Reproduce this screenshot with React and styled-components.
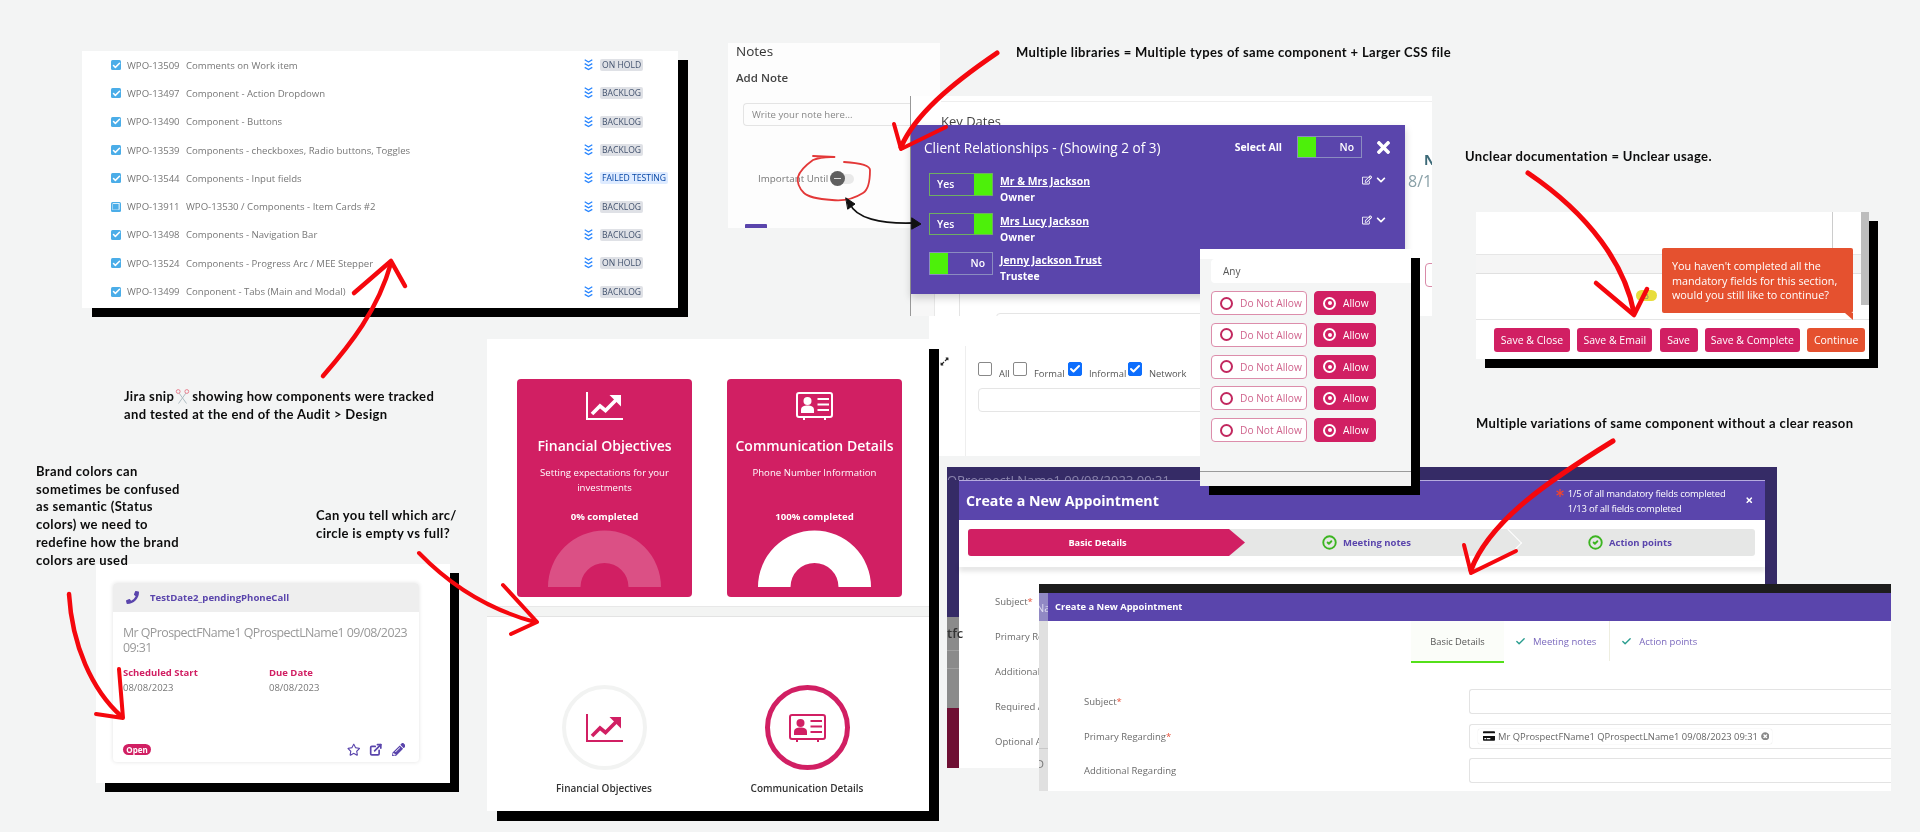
import React from 'react';
import styled, { createGlobalStyle } from 'styled-components';
import { FaPhoneAlt, FaRegStar, FaPencilAlt, FaRegEdit, FaChevronDown, FaTimes, FaAsterisk, FaExpandAlt, FaTimesCircle, FaCreditCard } from 'react-icons/fa';
import { FiExternalLink, FiCheck } from 'react-icons/fi';
import { LuCircleCheck } from 'react-icons/lu';

const UI = `"Open Sans", "Liberation Sans", sans-serif`;
const PINK = '#d11f63';
const PURPLE = '#5a45ac';

const Global = createGlobalStyle`
  html, body { margin: 0; padding: 0; background: #f3f4f4; overflow: hidden; }
  * { box-sizing: border-box; }
`;

const Canvas = styled.div`
  position: relative;
  width: 1920px;
  height: 832px;
  overflow: hidden;
  background: #f3f4f4;
  font-family: ${UI};
  filter: blur(0.35px);
`;

// every screenshot in the collage is a window on a free canvas
const Snip = styled.div`
  position: absolute;
  left: ${p => p.$x}px;
  top: ${p => p.$y}px;
  width: ${p => p.$w}px;
  height: ${p => p.$h}px;
  background: ${p => p.$bg || '#fff'};
  ${p => p.$shadow && `box-shadow: ${p.$shadow};`}
  overflow: ${p => p.$clip === false ? 'visible' : 'hidden'};
`;

const Note = styled.p`
  position: absolute;
  left: ${p => p.$x}px;
  top: ${p => p.$y}px;
  margin: 0;
  font-family: "Lato", "Liberation Sans", sans-serif;
  font-weight: 700;
  font-size: 13px;
  line-height: 17.7px;
  letter-spacing: 0.36px;
  color: #0c0c0c;
  white-space: nowrap;
`;

const Overlay = styled.svg`
  position: absolute;
  inset: 0;
  pointer-events: none;
`;

/* ---------- jira list ---------- */
const JiraRow = styled.div`
  display: grid;
  grid-template-columns: 10px 59px 404px 94px;
  align-items: center;
  height: 28.3px;
  padding-left: 29px;
  font-size: 9.6px;
  color: #777;
`;
const JiraKey = styled.span`
  margin-left: 6px;
  white-space: nowrap;
`;
const JiraTitle = styled.span`
  margin-left: 6px;
  white-space: nowrap;
`;
const JiraBox = styled.span`
  width: 10px;
  height: 10px;
  border-radius: 1.5px;
  background: #4bade8;
  display: flex;
  align-items: center;
  justify-content: center;
  color: #fff;
  font-size: 9px;
`;
const JiraStatus = styled.div`
  display: flex;
  align-items: center;
  gap: 7px;
`;
const Lozenge = styled.span`
  height: 12px;
  padding: 0 2px;
  border-radius: 2px;
  font-size: 8.6px;
  line-height: 12px;
  white-space: nowrap;
  background: ${p => p.$blue ? '#deebff' : '#dfe1e6'};
  color: ${p => p.$blue ? '#0747a6' : '#42526e'};
`;

const TriChevron = () => (
  <svg width="9" height="12" viewBox="0 0 9 12" fill="none" stroke="#2684ff" strokeWidth="1.3">
    <path d="M0.7 0.8 4.5 3 8.3 0.8M0.7 4.6 4.5 6.8 8.3 4.6M0.7 8.4 4.5 10.6 8.3 8.4" />
  </svg>
);

/* ---------- notes ---------- */
const NotesBody = styled.div`
  display: flex;
  flex-direction: column;
  height: 100%;
  padding-left: 8px;
  background: #fdfdfd;
`;
const NotesTitle = styled.div`
  font-size: 13.5px;
  line-height: 16px;
  color: #333;
`;
const AddNote = styled.div`
  margin-top: 11px;
  font-size: 11.5px;
  font-weight: 600;
  line-height: 16px;
  color: #444;
`;
const NoteInput = styled.div`
  margin: 17px 30px 0 7px;
  height: 23px;
  border: 1px solid #e4e4e4;
  border-right: 0;
  border-radius: 4px 0 0 4px;
  padding-left: 8px;
  font-size: 9.6px;
  line-height: 21px;
  color: #888;
  white-space: nowrap;
`;
const Important = styled.div`
  display: flex;
  align-items: center;
  margin: 46px 0 0 22px;
  font-size: 9.8px;
  color: #777;
`;
const NoteSwitch = styled.span`
  position: relative;
  margin-left: 2px;
  width: 24px;
  height: 10px;
  border-radius: 5px;
  background: #e9e9e9;
`;
const NoteKnob = styled.span`
  position: absolute;
  left: 0;
  top: -3px;
  width: 15px;
  height: 15px;
  border-radius: 50%;
  background: #5f5f5f;
  &::after {
    content: '';
    position: absolute;
    left: 4px;
    top: 7px;
    width: 7px;
    height: 1.5px;
    background: #ddd;
  }
`;
const NoteTab = styled.span`
  margin: auto 0 0 9px;
  width: 22px;
  height: 4px;
  background: ${PURPLE};
  border-radius: 1px 1px 0 0;
`;

/* ---------- key dates, behind the client panel ---------- */
const DatesPanel = styled.div`
  position: relative;
  display: grid;
  grid-template-columns: 24px 25px 1fr;
  grid-template-rows: 29px 1fr;
  height: 100%;
  border-left: 1px solid #999;
  background: #fff;
`;
const KeyDates = styled.div`
  grid-column: 1 / -1;
  margin: 5px 0 0 30px;
  padding-top: 12px;
  border-top: 1px solid #eee;
  font-size: 13px;
  line-height: 14px;
  color: #444;
`;
const DatesGutter = styled.div`
  background: #f7f7f7;
  border-right: 1px solid #e8e8e8;
`;
const DatesMiddle = styled.div`
  border-right: 1px solid #e4e4e4;
`;
const DateNumber = styled.span`
  position: absolute;
  left: ${p => p.$left}px;
  top: ${p => p.$top}px;
  font-size: ${p => p.$size}px;
  font-weight: ${p => p.$bold ? 700 : 400};
  color: ${p => p.$bold ? '#3d6a78' : '#8aa1a8'};
  white-space: nowrap;
`;
const DatesInput = styled.div`
  position: absolute;
  left: 85px;
  top: 217px;
  width: 300px;
  height: 30px;
  border: 1px solid #e5e5e5;
  border-radius: 4px;
`;
const DatesPinkEdge = styled.div`
  position: absolute;
  left: 514px;
  top: 167px;
  width: 30px;
  height: 24px;
  border: 1px solid #d98aa8;
  border-radius: 4px;
`;

/* ---------- client relationships ---------- */
const ClientBody = styled.div`
  height: 100%;
  padding: 11px 12px 0 13px;
  background: ${PURPLE};
  color: #fff;
`;
const ClientHeader = styled.div`
  display: flex;
  align-items: center;
  height: 22px;
  margin-bottom: 15px;
`;
const ClientTitle = styled.div`
  font-size: 13.6px;
  white-space: nowrap;
`;
const SelectAll = styled.span`
  margin-left: auto;
  margin-right: 15px;
  font-size: 10.4px;
  font-weight: 700;
`;
const Toggle = styled.span`
  display: flex;
  flex-direction: ${p => p.$on ? 'row' : 'row-reverse'};
  flex: none;
  width: ${p => p.$w || 64}px;
  height: 22.5px;
  border: 1px solid ${p => p.$on ? '#6fae62' : '#8b8cc0'};
  font-size: 10.4px;
  font-weight: 600;
  color: #fff;
`;
const ToggleLabel = styled.span`
  flex: 1;
  line-height: 21px;
  padding: ${p => p.$on ? '0 0 0 7px' : '0 7px 0 0'};
  text-align: ${p => p.$on ? 'left' : 'right'};
`;
const ToggleBlock = styled.span`
  width: 18px;
  background: #4df00a;
`;
const CloseX = styled(FaTimes)`
  margin-left: 12px;
  font-size: 19px;
  flex: none;
`;
const ClientRow = styled.div`
  display: flex;
  gap: 7px;
  height: 39.5px;
  padding-left: 5px;
`;
const ClientWho = styled.div`
  flex: 1;
  font-size: 10.4px;
  font-weight: 700;
  line-height: 16px;
`;
const ClientName = styled.div`
  text-decoration: underline;
  white-space: nowrap;
`;
const ClientTools = styled.div`
  display: flex;
  align-items: center;
  gap: 4px;
  height: 14px;
  padding-right: 7px;
  font-size: 10px;
`;

/* ---------- permissions ---------- */
const PermBody = styled.div`
  display: flex;
  flex-direction: column;
  height: 100%;
  padding: 10px 0 0 11px;
  background: linear-gradient(#fff 0, #fff 10px, #f4f5f5 10px);
`;
const AnyField = styled.div`
  height: 24px;
  margin-bottom: 8px;
  padding-left: 12px;
  background: #fff;
  border-radius: 4px 0 0 4px;
  font-size: 10px;
  line-height: 24px;
  color: #555;
`;
const PermRow = styled.div`
  display: flex;
  gap: 7px;
  height: 31.8px;
`;
const PermButton = styled.span`
  display: flex;
  align-items: center;
  gap: 7px;
  width: ${p => p.$w}px;
  height: 24px;
  padding-left: 8px;
  border-radius: 4px;
  border: 1px solid ${p => p.$solid ? PINK : '#dc8dab'};
  background: ${p => p.$solid ? PINK : '#fff'};
  color: ${p => p.$solid ? '#fff' : '#d0648d'};
  font-size: 10.2px;
  white-space: nowrap;
`;
const Radio = styled.span`
  position: relative;
  flex: none;
  width: 13px;
  height: 13px;
  border-radius: 50%;
  border: 2px solid ${p => p.$solid ? '#fff' : '#c2285f'};
  ${p => p.$solid && `
    &::after {
      content: '';
      position: absolute;
      left: 2.5px;
      top: 2.5px;
      width: 4px;
      height: 4px;
      border-radius: 50%;
      background: #fff;
    }
  `}
`;
const PermFooter = styled.div`
  margin: auto 0 0 -11px;
  height: 15px;
  border-top: 1px solid #9a9a9a;
  background: #f2f2f2;
`;

/* ---------- filter panel ---------- */
const FilterBody = styled.div`
  position: relative;
  height: 100%;
  padding: 46px 0 0 49px;
  background: #fff;
`;
const FilterEdge = styled.div`
  position: absolute;
  left: 36px;
  top: 30px;
  bottom: 0;
  border-left: 1px solid #eee;
`;
const ExpandIcon = styled(FaExpandAlt)`
  position: absolute;
  left: 11px;
  top: 41px;
  font-size: 9px;
  color: #222;
`;
const FilterRow = styled.div`
  display: flex;
  align-items: flex-start;
  height: 26px;
  font-size: 9.4px;
  color: #555;
`;
const FilterBox = styled.span`
  flex: none;
  width: 14px;
  height: 14px;
  border-radius: 2px;
  border: 1px solid ${p => p.$on ? '#0d6efd' : '#888'};
  background: ${p => p.$on ? '#0d6efd' : '#fff'};
  color: #fff;
  display: flex;
  align-items: center;
  justify-content: center;
  font-size: 12px;
`;
const FilterLabel = styled.span`
  flex: none;
  width: ${p => p.$w}px;
  padding: 5px 0 0 7px;
`;
const FilterInput = styled.div`
  width: 230px;
  height: 24px;
  border: 1px solid #e5e5e5;
  border-radius: 4px;
`;

/* ---------- progress tiles ---------- */
const ProgressBody = styled.div`
  display: flex;
  flex-direction: column;
  height: 100%;
`;
const TileRow = styled.div`
  display: flex;
  gap: 35px;
  height: 267px;
  padding: 40px 0 0 30px;
`;
const Tile = styled.div`
  position: relative;
  width: 175px;
  height: 218px;
  padding-top: 13px;
  border-radius: 4px;
  background: ${PINK};
  color: #fff;
  text-align: center;
  > svg:first-child {
    display: block;
    margin: 0 auto;
  }
`;
const TileTitle = styled.div`
  margin-top: 16px;
  font-size: 14px;
  font-weight: 600;
  line-height: 20px;
  white-space: nowrap;
`;
const TileSub = styled.div`
  height: 30px;
  margin-top: 8.5px;
  padding: 0 14px;
  font-size: 9.6px;
  line-height: 15px;
`;
const TileDone = styled.div`
  margin-top: 14px;
  font-size: 9.6px;
  font-weight: 700;
  line-height: 15px;
`;
const TileArc = styled.svg`
  position: absolute;
  left: 31px;
  top: 151px;
`;
const BandRule = styled.div`
  height: 11px;
  background: #f3f4f3;
  border-top: 1px solid #e8e8e8;
  border-bottom: 1px solid #e3e3e3;
`;
const RingRow = styled.div`
  display: grid;
  grid-template-columns: 234px 170px;
  column-gap: 1px;
  justify-content: start;
  padding-top: 68px;
`;
const RingCell = styled.div`
  display: flex;
  flex-direction: column;
  align-items: center;
`;
const Ring = styled.div`
  display: flex;
  align-items: center;
  justify-content: center;
  width: 85px;
  height: 85px;
  border-radius: 50%;
  border: ${p => p.$full ? `5px solid ${PINK}` : '4px solid #f2f3f2'};
  color: ${PINK};
`;
const RingLabel = styled.div`
  margin-top: 11px;
  font-size: 10px;
  font-weight: 600;
  line-height: 14px;
  color: #333;
  white-space: nowrap;
`;

const ChartIcon = () => (
  <svg width="37" height="28" viewBox="0 0 37 28" fill="none">
    <path d="M1 0V27H37" stroke="currentColor" strokeWidth="2" />
    <path d="M6 22 14 14 19.5 18.5 30 8" stroke="currentColor" strokeWidth="3.6" />
    <path d="M23.5 3 35 3 35 14.5Z" fill="currentColor" />
  </svg>
);

const CardIcon = () => (
  <svg width="37" height="28" viewBox="0 0 37 28" fill="none">
    <rect x="1" y="1" width="35" height="24" rx="2" stroke="currentColor" strokeWidth="2" />
    <path d="M8 25v3M29 25v3" stroke="currentColor" strokeWidth="2" />
    <circle cx="11.5" cy="9" r="4" fill="currentColor" />
    <path d="M5 21v-3c0-3.5 3-4.5 6.500-4.500s6.500 1 6.500 4.500v3Z" fill="currentColor" />
    <path d="M21.500 7H33M21.500 12.500H33M21.500 18H33" stroke="currentColor" strokeWidth="2" />
  </svg>
);

/* ---------- task card ---------- */
const TaskCard = styled.div`
  display: flex;
  flex-direction: column;
  height: 179px;
  margin: 19px 0 0 17px;
  width: 306px;
  border-radius: 4px;
  box-shadow: 0 0 4px rgba(0, 0, 0, 0.12);
  overflow: hidden;
`;
const TaskHead = styled.div`
  display: flex;
  align-items: center;
  gap: 11px;
  height: 29px;
  padding-left: 13px;
  background: #eeeeee;
  font-size: 9.6px;
  font-weight: 700;
  color: ${PURPLE};
`;
const TaskBody = styled.div`
  display: flex;
  flex-direction: column;
  flex: 1;
  padding: 13px 10px 6px 10px;
`;
const TaskName = styled.div`
  font-size: 12.4px;
  line-height: 15px;
  letter-spacing: -0.55px;
  color: #999;
`;
const TaskDates = styled.div`
  display: grid;
  grid-template-columns: 146px 1fr;
  margin-top: 11px;
  font-size: 9.5px;
  line-height: 14.500px;
  color: #777;
`;
const TaskDateLabel = styled.div`
  font-weight: 700;
  color: ${PINK};
`;
const TaskFoot = styled.div`
  display: flex;
  align-items: center;
  justify-content: space-between;
  margin-top: auto;
  padding-right: 4px;
`;
const OpenBadge = styled.span`
  width: 28px;
  height: 11px;
  border-radius: 6px;
  background: ${PINK};
  color: #fff;
  font-size: 8px;
  font-weight: 700;
  line-height: 11px;
  text-align: center;
`;
const TaskTools = styled.div`
  display: flex;
  gap: 9px;
  font-size: 13.500px;
  color: ${PURPLE};
`;

/* ---------- unclear docs ---------- */
const DocsBody = styled.div`
  position: relative;
  display: flex;
  flex-direction: column;
  height: 100%;
`;
const DocsTop = styled.div`
  height: 42px;
  width: 357px;
  border-right: 1px solid #ccc;
`;
const DocsBand = styled.div`
  height: 20px;
  width: 385px;
  background: #f5f5f5;
  border-top: 1px solid #e6e6e6;
  border-bottom: 1px solid #e0e0e0;
`;
const DocsMid = styled.div`
  height: 46px;
  border-bottom: 1px solid #e5e5e5;
`;
const DocsScroll = styled.div`
  position: absolute;
  right: 0;
  top: 0;
  width: 8px;
  height: 93px;
  background: #bdbdbd;
`;
const DocsButtons = styled.div`
  display: flex;
  gap: 7.300px;
  padding: 8px 0 0 18px;
`;
const DocsButton = styled.span`
  flex: none;
  width: ${p => p.$w}px;
  height: 24px;
  border-radius: 3px;
  background: ${p => p.$warn ? '#e5512f' : PINK};
  color: #fff;
  font-size: 10.500px;
  line-height: 24px;
  text-align: center;
  white-space: nowrap;
`;
const Tooltip = styled.div`
  position: absolute;
  left: 186px;
  top: 36px;
  width: 191px;
  height: 65px;
  padding: 11px 0 0 10px;
  border-radius: 2px;
  background: #e5512f;
  color: #fff;
  font-size: 10.800px;
  line-height: 14.700px;
  &::after {
    content: '';
    position: absolute;
    right: 0;
    bottom: -7px;
    border-top: 7px solid #e5512f;
    border-left: 8px solid transparent;
  }
`;
const YellowBlob = styled.span`
  position: absolute;
  left: 160px;
  top: 78px;
  width: 21px;
  height: 11px;
  border-radius: 6px;
  background: #e8dd3c;
  font-size: 8px;
  line-height: 11px;
  text-align: center;
  color: #777;
`;

/* ---------- appointment windows ---------- */
const BackFrame = styled.div`
  position: relative;
  height: 100%;
  padding: 13px 12px 0 12px;
  background: linear-gradient(
    #352b66 0, #352b66 150px,
    #8b8b8b 150px, #8b8b8b 183px, #a0a0a0 183px, #a0a0a0 184px,
    #8b8b8b 184px, #8b8b8b 201px, #a0a0a0 201px, #a0a0a0 202px,
    #8b8b8b 202px, #8b8b8b 241px, #6e0f33 241px
  );
`;
const BackGhost = styled.div`
  position: absolute;
  left: 0;
  top: 7px;
  height: 6px;
  overflow: hidden;
  font-size: 13px;
  line-height: 12px;
  color: #8a84ad;
  white-space: nowrap;
`;
const BackCut = styled.span`
  position: absolute;
  left: 0;
  top: 157px;
  font-size: 13px;
  font-weight: 600;
  color: #333;
`;
const BackWindow = styled.div`
  height: 100%;
  background: #fff;
  border-top: 1px solid #b6acde;
`;
const BackHeader = styled.div`
  display: flex;
  align-items: center;
  height: 39px;
  padding: 0 12px 0 7px;
  background: ${PURPLE};
  color: #fff;
`;
const BackTitle = styled.div`
  font-size: 14.200px;
  font-weight: 700;
  white-space: nowrap;
`;
const BackCount = styled.div`
  position: relative;
  margin-left: auto;
  font-size: 9.500px;
  letter-spacing: -0.2px;
  line-height: 15px;
  white-space: nowrap;
`;
const RedStar = styled(FaAsterisk)`
  position: absolute;
  left: -12px;
  top: 3px;
  font-size: 8px;
  color: #f0452e;
`;
const BackClose = styled(FaTimes)`
  margin-left: 19px;
  font-size: 8.500px;
`;
const Stepper = styled.div`
  display: flex;
  height: 27px;
  margin: 9px 10px 0 9px;
  background: #e6e7e6;
  border-radius: 3px;
`;
const StepActive = styled.div`
  flex: none;
  width: 277px;
  padding-right: 18px;
  border-radius: 3px 0 0 3px;
  background: ${PINK};
  clip-path: polygon(0 0, 261px 0, 100% 50%, 261px 100%, 0 100%);
  color: #fff;
  font-size: 9.200px;
  font-weight: 700;
  line-height: 27px;
  text-align: center;
`;
const Step = styled.div`
  position: relative;
  display: flex;
  align-items: center;
  gap: 6px;
  flex: none;
  width: ${p => p.$w}px;
  padding-left: ${p => p.$pad}px;
  font-size: 9.500px;
  font-weight: 700;
  color: ${PURPLE};
  ${p => p.$sep && `
    &::after {
      content: '';
      position: absolute;
      right: -8px;
      top: 4px;
      width: 19px;
      height: 19px;
      border-top: 1px solid #fff;
      border-right: 1px solid #fff;
      transform: rotate(45deg);
    }
  `}
`;
const StepperShade = styled.div`
  height: 6px;
  margin-top: 5px;
  box-shadow: 0 4px 5px rgba(0, 0, 0, 0.12);
`;
const BackForm = styled.div`
  padding: 16.500px 0 0 36px;
`;
const FormLabel = styled.div`
  display: flex;
  align-items: center;
  height: ${p => p.$h || 35}px;
  font-size: 9.500px;
  color: #6b6b6b;
  white-space: nowrap;
`;
const Req = styled.span`
  color: #e8503a;
`;
const FrontGrid = styled.div`
  display: grid;
  grid-template-columns: 9px 1fr;
  height: 100%;
  border-top: 9px solid #1d1d1d;
`;
const FrontSliver = styled.div`
  display: flex;
  flex-direction: column;
  background: linear-gradient(
    #9189c4 0, #9189c4 28px, #e0e0e0 28px, #e0e0e0 155px,
    #c8c8c8 155px, #c8c8c8 156px, #e0e0e0 156px
  );
  font-size: 11px;
  overflow: hidden;
  text-indent: -3px;
`;
const SliverText = styled.span`
  margin-top: ${p => p.$top}px;
  line-height: 14px;
  color: ${p => p.$dark ? '#777' : '#dcdaf0'};
`;
const FrontMain = styled.div`
  display: flex;
  flex-direction: column;
  background: #fff;
`;
const FrontHeader = styled.div`
  height: 28px;
  padding-left: 7px;
  background: ${PURPLE};
  color: #fff;
  font-size: 9.400px;
  font-weight: 700;
  line-height: 28px;
`;
const Tabs = styled.div`
  display: flex;
  height: 42px;
  padding-left: 363px;
`;
const TabCurrent = styled.div`
  width: 93px;
  height: 42px;
  background: #fbfdf9;
  border-bottom: 2.500px solid #54e01a;
  font-size: 9.300px;
  color: #555;
  line-height: 41px;
  text-align: center;
`;
const TabDone = styled.div`
  display: flex;
  align-items: center;
  gap: 7px;
  height: 40px;
  padding: 0 13px 0 11px;
  border-right: ${p => p.$rule ? '1px solid #eeeee0' : '0'};
  font-size: 9.500px;
  color: #7a68bd;
  white-space: nowrap;
  svg { color: #2a9d8f; font-size: 11px; }
`;
const FrontForm = styled.div`
  display: grid;
  grid-template-columns: 385px 1fr;
  row-gap: 9.500px;
  padding: 26px 0 0 36px;
`;
const FrontField = styled.div`
  display: flex;
  align-items: center;
  height: 25px;
  padding-left: 8px;
  border: 1px solid #e3e3e3;
  border-right: 0;
  border-radius: 3px 0 0 3px;
`;
const Chip = styled.span`
  display: flex;
  align-items: center;
  gap: 3px;
  height: 15px;
  padding: 0 3px 0 5px;
  width: 294px;
  border-radius: 2px;
  font-size: 9.400px;
  color: #666;
  white-space: nowrap;
  box-shadow: 0 0 1px rgba(0, 0, 0, 0.2);
  svg:first-child { color: #111; font-size: 12px; flex: none; }
  svg:last-child { color: #888; font-size: 8.500px; flex: none; margin-left: auto; }
`;

/* ---------- data ---------- */
const jiraRows = [
  ['WPO-13509', 'Comments on Work item', 'ON HOLD'],
  ['WPO-13497', 'Component - Action Dropdown', 'BACKLOG'],
  ['WPO-13490', 'Component - Buttons', 'BACKLOG'],
  ['WPO-13539', 'Components - checkboxes, Radio buttons, Toggles', 'BACKLOG'],
  ['WPO-13544', 'Components - Input fields', 'FAILED TESTING'],
  ['WPO-13911', 'WPO-13530 / Components - Item Cards #2', 'BACKLOG'],
  ['WPO-13498', 'Components - Navigation Bar', 'BACKLOG'],
  ['WPO-13524', 'Components - Progress Arc / MEE Stepper', 'ON HOLD'],
  ['WPO-13499', 'Conponent - Tabs (Main and Modal)', 'BACKLOG'],
];

const clientRows = [
  { name: 'Mr & Mrs Jackson', role: 'Owner', on: true },
  { name: 'Mrs Lucy Jackson', role: 'Owner', on: true },
  { name: 'Jenny Jackson Trust', role: 'Trustee', on: false },
];

const filters = [
  ['All', false, 21],
  ['Formal', false, 41],
  ['Informal', true, 46],
  ['Network', true, 60],
];

const docsButtons = [
  ['Save & Close', 76],
  ['Save & Email', 75],
  ['Save', 38],
  ['Save & Complete', 95],
  ['Continue', 58, true],
];

const Arc = ({ fill, opacity }) => (
  <TileArc width="113" height="57" viewBox="0 0 113 57">
    <path d="M0 57A56.500 56.500 0 0 1 113 57H80.500A24 24 0 0 0 32.500 57Z" fill={fill} opacity={opacity} />
  </TileArc>
);

const Scissors = () => (
  <svg width="15" height="15" viewBox="0 0 15 15" fill="none" style={{ verticalAlign: '-3px', margin: '0 2px 0 1px' }}>
    <path d="M4 4 11.500 14.500M11 4 3.500 14.500" stroke="#aebcc2" strokeWidth="1" />
    <circle cx="3.200" cy="2.500" r="1.900" stroke="#e8808f" strokeWidth="1" />
    <circle cx="11.800" cy="2.500" r="1.900" stroke="#e8808f" strokeWidth="1" />
  </svg>
);

const RED = '#f5070d';

const Arrows = () => (
  <Overlay width="1920" height="832" viewBox="0 0 1920 832" fill="none" strokeLinecap="round" strokeLinejoin="round">
    <g stroke={RED} strokeWidth="4.500">
      <path d="M323 376C350 345 378 310 391 263" />
      <path d="M354 293 391 261 405 286" />
      <path d="M997 53C950 85 915 115 901 147" strokeWidth="5" />
      <path d="M894 124 901 149 946 127" strokeWidth="4" />
      <path d="M1528 173C1590 215 1625 265 1634 313" strokeWidth="5" />
      <path d="M1596 283 1634 315 1647 289" strokeWidth="4.500" />
      <path d="M69 594C72 645 92 690 121 716" strokeWidth="4.500" />
      <path d="M119 669 123 718 96 714" strokeWidth="4" />
      <path d="M419 553C450 585 490 610 535 622" strokeWidth="4" />
      <path d="M503 585 537 622 511 634" strokeWidth="4" />
      <path d="M1613 441C1550 480 1490 520 1471 570" strokeWidth="5" />
      <path d="M1464 545 1471 573 1516 551" strokeWidth="4" />
    </g>
    <path d="M813 156 834.500 157M844 162C860 163 870 165 870 170 870 180 868 190 863 193 852 200 840 201 832 200 818 199 808 197 804 193 798 187 797 182 798 177 800 170 806 165 813 160 820 157 826 157 831 157" stroke="#e33838" strokeWidth="1.800" />
    <path d="M850 204C856 218 880 224 913 223" stroke="#111" strokeWidth="1.800" />
    <path d="M846 198 855 204 848 209Z M912 218 921 224 912 229Z" fill="#111" stroke="#111" />
  </Overlay>
);

export default function App() {
  return (
    <>
      <Global />
      <Canvas>
        <Snip $x={82} $y={51} $w={596} $h={257} $shadow="10px 9px 0 #000">
          {jiraRows.map(([key, title, status], i) => (
            <JiraRow key={key}>
              <JiraBox>{i === 5 ? '❐' : <FiCheck strokeWidth={4} />}</JiraBox>
              <JiraKey>{key}</JiraKey>
              <JiraTitle>{title}</JiraTitle>
              <JiraStatus>
                <TriChevron />
                <Lozenge $blue={status === 'FAILED TESTING'}>{status}</Lozenge>
              </JiraStatus>
            </JiraRow>
          ))}
        </Snip>

        <Snip $x={728} $y={43} $w={212} $h={185}>
          <NotesBody>
            <NotesTitle>Notes</NotesTitle>
            <AddNote>Add Note</AddNote>
            <NoteInput>Write your note here...</NoteInput>
            <Important>
              Important Until
              <NoteSwitch><NoteKnob /></NoteSwitch>
            </Important>
            <NoteTab />
          </NotesBody>
        </Snip>

        <Snip $x={910} $y={96} $w={522} $h={220} $bg="transparent">
          <DatesPanel>
            <KeyDates>Key Dates</KeyDates>
            <DatesGutter />
            <DatesMiddle />
            <DateNumber $left={513} $top={54} $size={14} $bold>N</DateNumber>
            <DateNumber $left={497} $top={74} $size={16}>8/19</DateNumber>
            <DatesPinkEdge />
            <DatesInput />
          </DatesPanel>
        </Snip>

        <Snip $x={911} $y={125} $w={494} $h={169} $shadow="0 4px 8px rgba(0,0,0,0.18)">
          <ClientBody>
            <ClientHeader>
              <ClientTitle>Client Relationships - (Showing 2 of 3)</ClientTitle>
              <SelectAll>Select All</SelectAll>
              <Toggle $w={65}>
                <ToggleLabel>No</ToggleLabel>
                <ToggleBlock />
              </Toggle>
              <CloseX />
            </ClientHeader>
            {clientRows.map(row => (
              <ClientRow key={row.name}>
                <Toggle $on={row.on}>
                  <ToggleLabel $on={row.on}>{row.on ? 'Yes' : 'No'}</ToggleLabel>
                  <ToggleBlock />
                </Toggle>
                <ClientWho>
                  <ClientName>{row.name}</ClientName>
                  {row.role}
                </ClientWho>
                {row.on && (
                  <ClientTools>
                    <FaRegEdit />
                    <FaChevronDown />
                  </ClientTools>
                )}
              </ClientRow>
            ))}
          </ClientBody>
        </Snip>

        <Snip $x={929} $y={316} $w={290} $h={140}>
          <FilterBody>
            <FilterEdge />
            <ExpandIcon />
            <FilterRow>
              {filters.map(([label, on, w]) => (
                <React.Fragment key={label}>
                  <FilterBox $on={on}>{on && <FiCheck strokeWidth={4} />}</FilterBox>
                  <FilterLabel $w={w}>{label}</FilterLabel>
                </React.Fragment>
              ))}
            </FilterRow>
            <FilterInput />
          </FilterBody>
        </Snip>

        <Snip $x={487} $y={339} $w={442} $h={472} $shadow="10px 10px 0 #000">
          <ProgressBody>
            <TileRow>
              <Tile>
                <ChartIcon />
                <TileTitle>Financial Objectives</TileTitle>
                <TileSub>Setting expectations for your investments</TileSub>
                <TileDone>0% completed</TileDone>
                <Arc fill="#fff" opacity={0.22} />
              </Tile>
              <Tile>
                <CardIcon />
                <TileTitle>Communication Details</TileTitle>
                <TileSub>Phone Number Information</TileSub>
                <TileDone>100% completed</TileDone>
                <Arc fill="#fff" />
              </Tile>
            </TileRow>
            <BandRule />
            <RingRow>
              <RingCell>
                <Ring><ChartIcon /></Ring>
                <RingLabel>Financial Objectives</RingLabel>
              </RingCell>
              <RingCell>
                <Ring $full><CardIcon /></Ring>
                <RingLabel>Communication Details</RingLabel>
              </RingCell>
            </RingRow>
          </ProgressBody>
        </Snip>

        <Snip $x={96} $y={564} $w={354} $h={219} $shadow="9px 9px 0 #000">
          <TaskCard>
            <TaskHead>
              <FaPhoneAlt size={13} style={{ transform: 'scaleX(-1)' }} />
              TestDate2_pendingPhoneCall
            </TaskHead>
            <TaskBody>
              <TaskName>Mr QProspectFName1 QProspectLName1 09/08/2023 09:31</TaskName>
              <TaskDates>
                <TaskDateLabel>Scheduled Start</TaskDateLabel>
                <TaskDateLabel>Due Date</TaskDateLabel>
                <div>08/08/2023</div>
                <div>08/08/2023</div>
              </TaskDates>
              <TaskFoot>
                <OpenBadge>Open</OpenBadge>
                <TaskTools>
                  <FaRegStar />
                  <FiExternalLink strokeWidth={3} />
                  <FaPencilAlt />
                </TaskTools>
              </TaskFoot>
            </TaskBody>
          </TaskCard>
        </Snip>

        <Snip $x={1476} $y={212} $w={393} $h={147} $shadow="9px 9px 0 #000" $clip={false}>
          <DocsBody>
            <DocsTop />
            <DocsBand />
            <DocsMid />
            <DocsScroll />
            <YellowBlob>5</YellowBlob>
            <Tooltip>
              You haven't completed all the<br />
              mandatory fields for this section,<br />
              would you still like to continue?
            </Tooltip>
            <DocsButtons>
              {docsButtons.map(([label, w, warn]) => (
                <DocsButton key={label} $w={w} $warn={warn}>{label}</DocsButton>
              ))}
            </DocsButtons>
          </DocsBody>
        </Snip>

        <Snip $x={947} $y={467} $w={830} $h={301}>
          <BackFrame>
            <BackGhost>QProspectLName1 09/08/2023 09:31</BackGhost>
            <BackCut>tfc</BackCut>
            <BackWindow>
              <BackHeader>
                <BackTitle>Create a New Appointment</BackTitle>
                <BackCount>
                  <RedStar />
                  1/5 of all mandatory fields completed<br />
                  1/13 of all fields completed
                </BackCount>
                <BackClose />
              </BackHeader>
              <Stepper>
                <StepActive>Basic Details</StepActive>
                <Step $w={265} $pad={77} $sep>
                  <LuCircleCheck size={15} strokeWidth={3} color="#3cb521" />
                  Meeting notes
                </Step>
                <Step $w={245} $pad={78}>
                  <LuCircleCheck size={15} strokeWidth={3} color="#3cb521" />
                  Action points
                </Step>
              </Stepper>
              <StepperShade />
              <BackForm>
                <FormLabel>Subject<Req>*</Req></FormLabel>
                <FormLabel>Primary Re</FormLabel>
                <FormLabel>Additional</FormLabel>
                <FormLabel>Required A</FormLabel>
                <FormLabel>Optional A</FormLabel>
              </BackForm>
            </BackWindow>
          </BackFrame>
        </Snip>

        <Snip $x={1200} $y={249} $w={211} $h={237} $shadow="9px 9px 0 #000">
          <PermBody>
            <AnyField>Any</AnyField>
            {[0, 1, 2, 3, 4].map(i => (
              <PermRow key={i}>
                <PermButton $w={96}><Radio />Do Not Allow</PermButton>
                <PermButton $w={62} $solid><Radio $solid />Allow</PermButton>
              </PermRow>
            ))}
            <PermFooter />
          </PermBody>
        </Snip>

        <Snip $x={1039} $y={584} $w={852} $h={207}>
          <FrontGrid>
            <FrontSliver>
              <SliverText $top={8}>Na</SliverText>
              <SliverText $top={142} $dark>D</SliverText>
            </FrontSliver>
            <FrontMain>
              <FrontHeader>Create a New Appointment</FrontHeader>
              <Tabs>
                <TabCurrent>Basic Details</TabCurrent>
                <TabDone $rule><FiCheck strokeWidth={3} />Meeting notes</TabDone>
                <TabDone><FiCheck strokeWidth={3} />Action points</TabDone>
              </Tabs>
              <FrontForm>
                <FormLabel $h={25}>Subject<Req>*</Req></FormLabel>
                <FrontField />
                <FormLabel $h={25}>Primary Regarding<Req>*</Req></FormLabel>
                <FrontField>
                  <Chip>
                    <FaCreditCard />
                    Mr QProspectFName1 QProspectLName1 09/08/2023 09:31
                    <FaTimesCircle />
                  </Chip>
                </FrontField>
                <FormLabel $h={25}>Additional Regarding</FormLabel>
                <FrontField />
              </FrontForm>
            </FrontMain>
          </FrontGrid>
        </Snip>

        <Note $x={1016} $y={44}>Multiple libraries = Multiple types of same component + Larger CSS file</Note>
        <Note $x={124} $y={388}>
          Jira snip<Scissors />showing how components were tracked<br />
          and tested at the end of the Audit &gt; Design
        </Note>
        <Note $x={36} $y={463}>
          Brand colors can<br />
          sometimes be confused<br />
          as semantic (Status<br />
          colors) we need to<br />
          redefine how the brand<br />
          colors are used
        </Note>
        <Note $x={316} $y={507}>
          Can you tell which arc/<br />
          circle is empty vs full?
        </Note>
        <Note $x={1465} $y={148}>Unclear documentation = Unclear usage.</Note>
        <Note $x={1476} $y={415}>Multiple variations of same component without a clear reason</Note>

        <Arrows />
      </Canvas>
    </>
  );
}
